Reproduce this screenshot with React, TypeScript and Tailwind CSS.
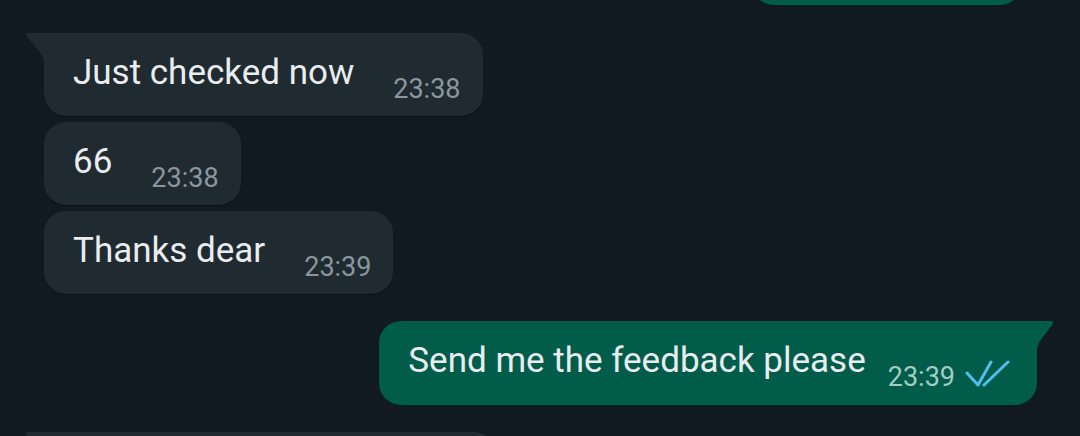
import React from "react";

const font = { fontFamily: "Roboto, 'Noto Sans', 'Liberation Sans', sans-serif" };

function InTail() {
  return (
    <svg className="absolute left-[-20px] top-0" width="22" height="28" viewBox="0 0 22 28">
      <path d="M22 0 L5 0 Q0 0 3 4 L13 16 Q20 24 20 28 L22 28 Z" fill="#1f2a31" />
    </svg>
  );
}

function OutTail() {
  return (
    <svg className="absolute right-[-18px] top-0" width="20" height="30" viewBox="0 0 20 30">
      <path d="M0 0 L15 0 Q20 0 17 4 L8 16 Q2 23 2 30 L0 30 Z" fill="#025c4a" />
    </svg>
  );
}

function Checks() {
  return (
    <svg width="46" height="28" viewBox="0 0 46 28" className="ml-[10px] mb-[1px]">
      <path d="M2 13 L13 25 L26 2" stroke="#53bdeb" strokeWidth="3" fill="none" strokeLinecap="round" strokeLinejoin="round" />
      <path d="M19 25 L43 2" stroke="#53bdeb" strokeWidth="3" fill="none" strokeLinecap="round" />
    </svg>
  );
}

function Incoming({ text, time, tail }: { text: string; time: string; tail?: boolean }) {
  return (
    <div
      className={`relative flex items-start h-[83px] pl-[29px] pr-[22px] pt-[20px] bg-[#1f2a31] rounded-[22px] shadow-[0_1px_0_#0b1014] ${
        tail ? "rounded-tl-none" : ""
      }`}
    >
      {tail && <InTail />}
      <span className="text-[35px] leading-[40px] text-[#e9edef]">{text}</span>
      <span className="ml-[39px] mt-[21px] text-[27px] leading-[30px] text-[#8a979f]">{time}</span>
    </div>
  );
}

export default function App() {
  return (
    <div className="w-[1080px] h-[436px] overflow-hidden bg-[#121a21] flex flex-col" style={font}>
      <div className="flex justify-end pr-[58px]">
        <div className="w-[270px] h-[60px] -mt-[55px] bg-[#025c4a] rounded-[22px] shadow-[0_1px_0_#06201c]" />
      </div>

      <div className="flex flex-col items-start gap-[6px] pl-[44px] mt-[28px]">
        <Incoming text="Just checked now" time="23:38" tail />
        <Incoming text="66" time="23:38" />
        <Incoming text="Thanks dear" time="23:39" />
      </div>

      <div className="flex justify-end pr-[43px] mt-[27px]">
        <div className="relative flex items-start h-[84px] pl-[29px] pr-[26px] pt-[20px] bg-[#025c4a] rounded-[22px] rounded-tr-none shadow-[0_1px_0_#06201c]">
          <OutTail />
          <span className="text-[35px] leading-[40px] text-[#e9edef]">Send me the feedback please</span>
          <span className="ml-[22px] mt-[21px] text-[27px] leading-[30px] text-[#a3ccc1]">23:39</span>
          <div className="mt-[19px]">
            <Checks />
          </div>
        </div>
      </div>

      <div className="pl-[44px] mt-[27px]">
        <div className="relative w-[452px] h-[60px] bg-[#1f2a31] rounded-[22px] rounded-tl-none">
          <InTail />
        </div>
      </div>
    </div>
  );
}
